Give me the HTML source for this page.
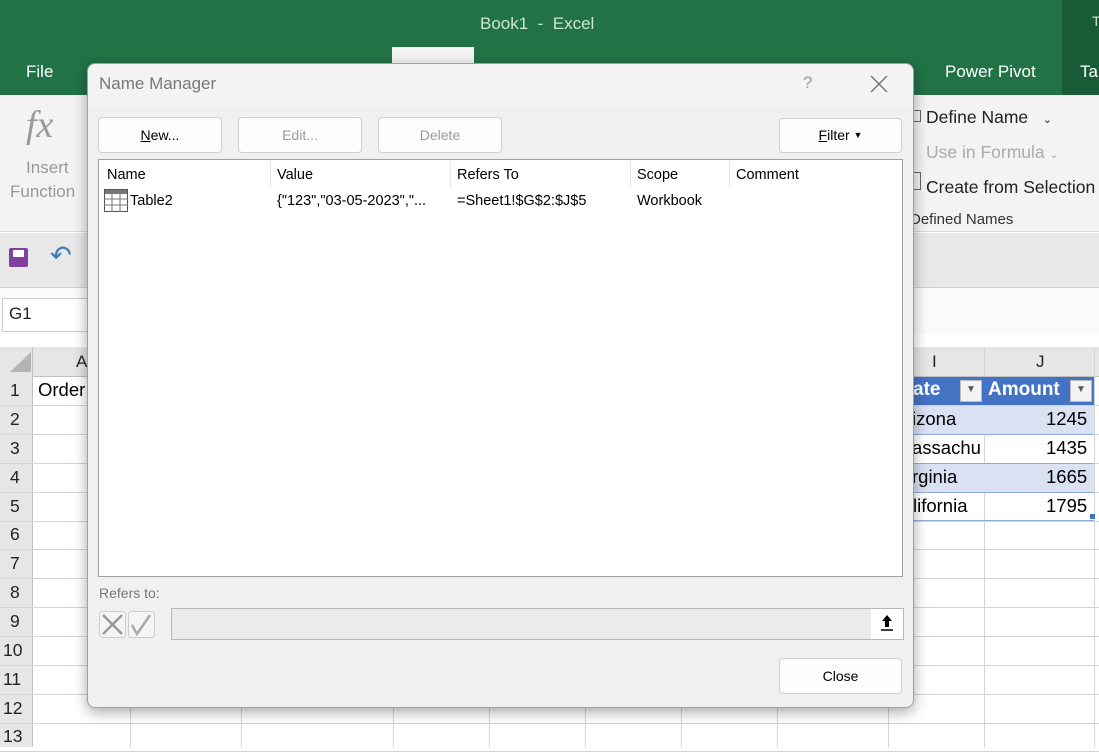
<!DOCTYPE html>
<html><head><style>
*{margin:0;padding:0;box-sizing:border-box}
body{width:1099px;height:747px;overflow:hidden;position:relative;background:#fff;font-family:"Segoe UI","Liberation Sans",sans-serif;}
.a{position:absolute}
.t{white-space:nowrap}
.btn{position:absolute;background:#fdfdfd;border:1px solid #d0d0d0;border-radius:4px;font-size:14px;text-align:center;color:#000}
.hl{position:absolute;height:1px;background:#d4d4d4}
.vl{position:absolute;width:1px;background:#d4d4d4}
</style></head><body>
<div class="a" style="left:0;top:0;width:1099px;height:95px;background:#217346"></div>
<div class="a" style="left:1062px;top:0;width:37px;height:95px;background:#185c37"></div>
<div class="a" style="left:392px;top:47px;width:82px;height:16px;background:#f3f3f3"></div>
<div class="a t" style="left:480px;top:14px;font-size:17px;color:#cfe3d6">Book1&nbsp; -&nbsp; Excel</div>
<div class="a t" style="left:1092px;top:13px;font-size:14px;color:#cfe3d6">T</div>
<div class="a t" style="left:26px;top:62px;font-size:17px;color:#fff">File</div>
<div class="a t" style="left:945px;top:62px;font-size:17px;color:#fff">Power Pivot</div>
<div class="a t" style="left:1080px;top:62px;font-size:17px;color:#fff">Tab</div>
<!-- ribbon -->
<div class="a" style="left:0;top:95px;width:1099px;height:137px;background:#f3f3f3;border-bottom:1px solid #d8d8d8"></div>
<div class="a t" style="left:26px;top:103px;font-size:38px;font-style:italic;font-family:'Liberation Serif',serif;color:#999">fx</div>
<div class="a t" style="left:10px;top:156px;font-size:17px;color:#999;text-align:center;line-height:24px">&nbsp;&nbsp;Insert<br>Function</div>
<div class="a" style="left:913px;top:110px;width:8px;height:12px;border:1px solid #666"></div>
<div class="a t" style="left:926px;top:107px;font-size:17.5px;color:#222">Define Name&nbsp;&nbsp; <span style="font-size:11px">&#8964;</span></div>
<div class="a t" style="left:926px;top:142px;font-size:17.5px;color:#aaa">Use in Formula <span style="font-size:11px">&#8964;</span></div>
<div class="a" style="left:913px;top:172px;width:8px;height:18px;border:1px solid #666"></div>
<div class="a t" style="left:926px;top:177px;font-size:17.5px;color:#222">Create from Selection</div>
<div class="a t" style="left:910px;top:211px;font-size:15px;color:#333">Defined Names</div>
<div class="a" style="left:0;top:233px;width:1099px;height:55px;background:#e8e8e8;border-bottom:1px solid #d0d0d0"></div>
<div class="a" style="left:9px;top:248px;width:19px;height:19px;background:#8040a0;border-radius:2px"></div>
<div class="a" style="left:13px;top:250px;width:11px;height:7px;background:#fff"></div>
<div class="a t" style="left:50px;top:240px;font-size:26px;color:#3a78b8">&#8630;</div>
<div class="a" style="left:0;top:289px;width:1099px;height:45px;background:#fafafa"></div>
<div class="a" style="left:2px;top:298px;width:100px;height:34px;background:#fff;border:1px solid #ccc"></div>
<div class="a t" style="left:9px;top:304px;font-size:17px;color:#222">G1</div>
<!-- grid -->
<div class="a" style="left:0;top:347px;width:1099px;height:30px;background:#e6e6e6;border-bottom:1px solid #c0c0c0"></div>
<div class="a" style="left:0;top:347px;width:33px;height:400px;background:#e6e6e6;border-right:1px solid #c0c0c0"></div>
<div class="a" style="left:10px;top:352px;width:0;height:0;border-left:21px solid transparent;border-bottom:20px solid #b4b4b4"></div>
<div class="a t" style="left:76px;top:352px;font-size:17px;color:#222">A</div>
<div class="a t" style="left:932px;top:352px;font-size:17px;color:#222">I</div>
<div class="a t" style="left:1036px;top:352px;font-size:17px;color:#222">J</div>
<div class="vl" style="left:984px;top:347px;height:400px"></div>
<div class="vl" style="left:1094px;top:347px;height:400px"></div>
<div class="vl" style="left:130px;top:700px;height:47px"></div>
<div class="vl" style="left:241px;top:700px;height:47px"></div>
<div class="vl" style="left:393px;top:700px;height:47px"></div>
<div class="vl" style="left:489px;top:700px;height:47px"></div>
<div class="vl" style="left:585px;top:700px;height:47px"></div>
<div class="vl" style="left:681px;top:700px;height:47px"></div>
<div class="vl" style="left:777px;top:700px;height:47px"></div>
<div class="vl" style="left:888px;top:347px;height:400px"></div>
<div id="rows"></div>
<div class="a" style="left:888px;top:377px;width:206px;height:28px;background:#4472c4"></div>
<div class="a t" style="left:913px;top:379px;font-size:19px;font-weight:bold;color:#fff">ate</div>
<div class="a" style="left:960px;top:380px;width:22px;height:22px;background:#f3f3f3;border:1px solid #bbb"></div>
<div class="a t" style="left:966px;top:384px;font-size:10px;color:#555">&#9660;</div>
<div class="a t" style="left:988px;top:379px;font-size:19px;font-weight:bold;color:#fff">Amount</div>
<div class="a" style="left:1070px;top:380px;width:22px;height:22px;background:#f3f3f3;border:1px solid #bbb"></div>
<div class="a t" style="left:1076px;top:384px;font-size:10px;color:#555">&#9660;</div>
<div class="a" style="left:888px;top:406px;width:206px;height:28px;background:#d9e1f2"></div>
<div class="a" style="left:888px;top:464px;width:206px;height:28px;background:#d9e1f2"></div>
<div class="a" style="left:888px;top:434px;width:206px;height:1px;background:#8ea9db"></div>
<div class="a" style="left:888px;top:463px;width:206px;height:1px;background:#8ea9db"></div>
<div class="a" style="left:888px;top:492px;width:206px;height:1px;background:#8ea9db"></div>
<div class="a" style="left:888px;top:520px;width:206px;height:1px;background:#8ea9db"></div>
<div class="a t" style="left:912px;top:408px;font-size:18.5px;color:#000">izona</div>
<div class="a t" style="left:912px;top:437px;font-size:18.5px;color:#000">assachu</div>
<div class="a t" style="left:912px;top:466px;font-size:18.5px;color:#000">rginia</div>
<div class="a t" style="left:913px;top:495px;font-size:18.5px;color:#000">lifornia</div>
<div class="a t" style="left:1046px;top:408px;font-size:18.5px">1245</div>
<div class="a t" style="left:1046px;top:437px;font-size:18.5px">1435</div>
<div class="a t" style="left:1046px;top:466px;font-size:18.5px">1665</div>
<div class="a t" style="left:1046px;top:495px;font-size:18.5px">1795</div>
<div class="a" style="left:1090px;top:514px;width:5px;height:5px;background:#4472c4"></div>
<div class="a t" style="left:38px;top:379px;font-size:18.5px">Order</div>
<!-- dialog -->
<div class="a" style="left:87px;top:63px;width:827px;height:645px;background:#f0f0f0;border:1px solid #a0a0a0;border-radius:8px;box-shadow:0 4px 14px rgba(0,0,0,.35)"></div>
<div class="a" style="left:88px;top:64px;width:825px;height:42px;background:#f3f3f3;border-radius:8px 8px 0 0"></div>
<div class="a t" style="left:99px;top:74px;font-size:17px;color:#777">Name Manager</div>
<div class="a t" style="left:803px;top:73px;font-size:17px;color:#999">?</div>
<svg class="a" style="left:870px;top:75px" width="18" height="18"><path d="M1 1L17 17M17 1L1 17" stroke="#777" stroke-width="1.5"/></svg>
<div class="btn" style="left:98px;top:117px;width:124px;height:36px;line-height:34px"><u>N</u>ew...</div>
<div class="btn" style="left:238px;top:117px;width:124px;height:36px;line-height:34px;color:#999">Edit...</div>
<div class="btn" style="left:378px;top:117px;width:124px;height:36px;line-height:34px;color:#999">Delete</div>
<div class="btn" style="left:779px;top:118px;width:123px;height:35px;line-height:33px"><u>F</u>ilter <span style="font-size:9px;vertical-align:2px">&#9660;</span></div>
<div class="a" style="left:98px;top:159px;width:805px;height:418px;background:#fff;border:1px solid #a0a0a0"></div>
<div class="vl" style="left:270px;top:161px;height:27px;background:#e5e5e5"></div>
<div class="vl" style="left:450px;top:161px;height:27px;background:#e5e5e5"></div>
<div class="vl" style="left:630px;top:161px;height:27px;background:#e5e5e5"></div>
<div class="vl" style="left:729px;top:161px;height:27px;background:#e5e5e5"></div>
<div class="a t" style="left:107px;top:167px;font-size:14.5px">Name</div>
<div class="a t" style="left:277px;top:167px;font-size:14.5px">Value</div>
<div class="a t" style="left:457px;top:167px;font-size:14.5px">Refers To</div>
<div class="a t" style="left:637px;top:167px;font-size:14.5px">Scope</div>
<div class="a t" style="left:736px;top:167px;font-size:14.5px">Comment</div>
<svg class="a" style="left:104px;top:189px" width="24" height="23"><rect x="0.5" y="0.5" width="23" height="22" fill="#fff" stroke="#555"/><rect x="1" y="1" width="22" height="4" fill="#777"/><path d="M0 10H24M0 16H24M8 5V23M16 5V23" stroke="#777"/></svg>
<div class="a t" style="left:130px;top:193px;font-size:14.5px">Table2</div>
<div class="a t" style="left:277px;top:193px;font-size:14.5px">{"123","03-05-2023","...</div>
<div class="a t" style="left:457px;top:193px;font-size:14.5px">=Sheet1!$G$2:$J$5</div>
<div class="a t" style="left:637px;top:193px;font-size:14.5px">Workbook</div>
<div class="a t" style="left:99px;top:585px;font-size:14px;color:#777">Refers to:</div>
<svg class="a" style="left:99px;top:611px" width="56" height="27"><rect x="0.5" y="0.5" width="26" height="26" rx="3" fill="#f5f5f5" stroke="#ccc"/><rect x="29.5" y="0.5" width="26" height="26" rx="3" fill="#f5f5f5" stroke="#ccc"/><path d="M4 4L23 23M23 4L4 23" stroke="#999" stroke-width="2.5"/><path d="M33 14L38 23L51 4" stroke="#aaa" stroke-width="2.5" fill="none"/></svg>
<div class="a" style="left:171px;top:608px;width:733px;height:32px;border:1px solid #b8b8b8;background:#ebebeb"></div>
<svg class="a" style="left:871px;top:609px" width="32" height="30"><rect width="32" height="30" fill="#fff"/><path d="M16 6L11 12H14V18H18V12H21Z" fill="#000"/><path d="M10 21H22" stroke="#000" stroke-width="1.5"/></svg>
<div class="btn" style="left:779px;top:658px;width:123px;height:36px;line-height:34px">Close</div>
<script>
var h='';var ys=[377,406,435,464,493,521,550,579,608,637,666,695,723];
for(var i=0;i<13;i++){h+='<div class="a t" style="left:'+(i<9?10:3)+'px;top:'+(ys[i]+3)+'px;font-size:17.5px;color:#222">'+(i+1)+'</div>';
h+='<div class="hl" style="left:0;top:'+(ys[i]+28)+'px;width:1099px"></div>';}
document.getElementById('rows').outerHTML=h;
</script>
</body></html>
